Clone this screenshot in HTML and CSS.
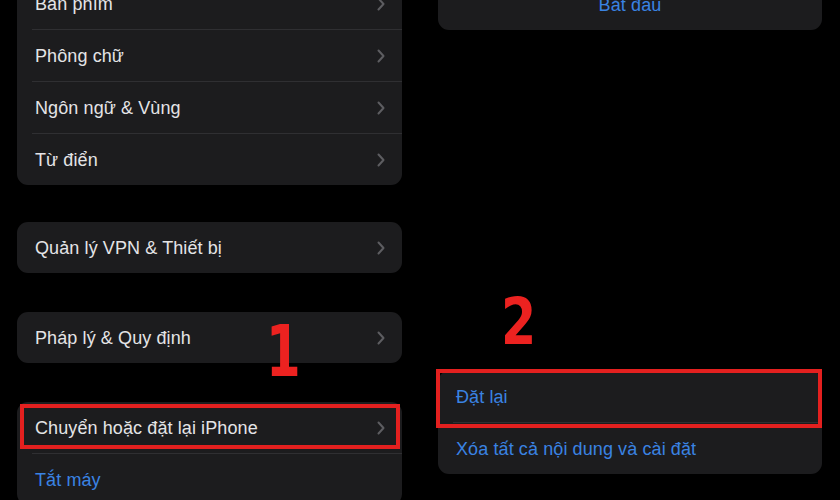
FILE: index.html
```html
<!DOCTYPE html>
<html lang="vi">
<head>
<meta charset="utf-8">
<link rel="stylesheet" href="styles.css">
</head>
<body>
<div class="screen">
  <div class="col col-left">
    <div class="card first">
      <div class="row"><span class="label">Bàn phím</span><svg class="chev" viewBox="0 0 8 14"><path d="M1.5 1.5 L6.5 7 L1.5 12.5"/></svg></div>
      <div class="row"><span class="label">Phông chữ</span><svg class="chev" viewBox="0 0 8 14"><path d="M1.5 1.5 L6.5 7 L1.5 12.5"/></svg></div>
      <div class="row"><span class="label">Ngôn ngữ &amp; Vùng</span><svg class="chev" viewBox="0 0 8 14"><path d="M1.5 1.5 L6.5 7 L1.5 12.5"/></svg></div>
      <div class="row"><span class="label">Từ điển</span><svg class="chev" viewBox="0 0 8 14"><path d="M1.5 1.5 L6.5 7 L1.5 12.5"/></svg></div>
    </div>
    <div class="card">
      <div class="row"><span class="label">Quản lý VPN &amp; Thiết bị</span><svg class="chev" viewBox="0 0 8 14"><path d="M1.5 1.5 L6.5 7 L1.5 12.5"/></svg></div>
    </div>
    <div class="card">
      <div class="row"><span class="label">Pháp lý &amp; Quy định</span><svg class="chev" viewBox="0 0 8 14"><path d="M1.5 1.5 L6.5 7 L1.5 12.5"/></svg></div>
    </div>
    <div class="card">
      <div class="row"><span class="label">Chuyển hoặc đặt lại iPhone</span><svg class="chev" viewBox="0 0 8 14"><path d="M1.5 1.5 L6.5 7 L1.5 12.5"/></svg></div>
      <div class="row"><span class="label blue">Tắt máy</span></div>
    </div>
  </div>
  <div class="col col-right">
    <div class="card first-right">
      <div class="row center"><span class="label blue">Bắt đầu</span></div>
    </div>
    <div class="card reset">
      <div class="row"><span class="label blue">Đặt lại</span></div>
      <div class="row"><span class="label blue">Xóa tất cả nội dung và cài đặt</span></div>
    </div>
  </div>

  <div class="mark mark-box box-1"></div>
  <div class="mark mark-box box-2"></div>
  <div class="mark num num-1">1</div>
  <div class="mark num num-2">2</div>
</div>
</body>
</html>
```

FILE: styles.css
```css
html, body {
  margin: 0;
  padding: 0;
  background: #000;
}
body {
  width: 840px;
  height: 500px;
  overflow: hidden;
  font-family: "Liberation Sans", Arial, sans-serif;
}
.screen {
  position: relative;
  width: 840px;
  height: 500px;
  overflow: hidden;
  display: grid;
  grid-template-columns: 385px 384px;
  column-gap: 36px;
  padding: 0 18px 0 17px;
  box-sizing: border-box;
  align-items: start;
}
.col {
  display: flex;
  flex-direction: column;
}
.col-left {
  gap: 39px;
  margin-top: -22px;
}
.card.first {
  margin-bottom: -2px;
}
.col-right {
  margin-top: -21px;
}
.card {
  background: #1c1c1e;
  border-radius: 11px;
  overflow: hidden;
}
.row {
  height: 51px;
  margin-left: 15px;
  padding: 0 17px 0 3px;
  display: flex;
  align-items: center;
  justify-content: space-between;
  border-bottom: 1px solid #2f2f32;
}
.row:last-child {
  border-bottom: none;
}
.row.center {
  justify-content: center;
  margin-left: 0;
  padding: 0;
}
.label {
  color: #e4e4e6;
  font-size: 18px;
  letter-spacing: 0.1px;
  padding-top: 2px;
}
.label.blue {
  color: #3a83e3;
}
.chev {
  width: 8px;
  height: 14px;
  fill: none;
  stroke: #5d5d61;
  stroke-width: 2;
  stroke-linecap: round;
  stroke-linejoin: round;
}
.reset {
  margin-top: 341px;
}
.mark {
  position: absolute;
}
.mark-box {
  border: 4px solid #e3201f;
  box-sizing: border-box;
}
.box-1 {
  left: 20px;
  top: 404px;
  width: 380px;
  height: 45px;
}
.box-2 {
  left: 436px;
  top: 369px;
  width: 386px;
  height: 59px;
}
.num {
  font-family: "DejaVu Sans", sans-serif;
  font-stretch: condensed;
  font-weight: bold;
  color: #ec2220;
  line-height: 1;
  transform-origin: left top;
}
.num-1 {
  left: 266px;
  top: 316px;
  font-size: 71px;
  transform: scaleX(0.78);
}
.num-2 {
  left: 501px;
  top: 290px;
  font-size: 64px;
  transform: scaleX(0.88);
}
```
